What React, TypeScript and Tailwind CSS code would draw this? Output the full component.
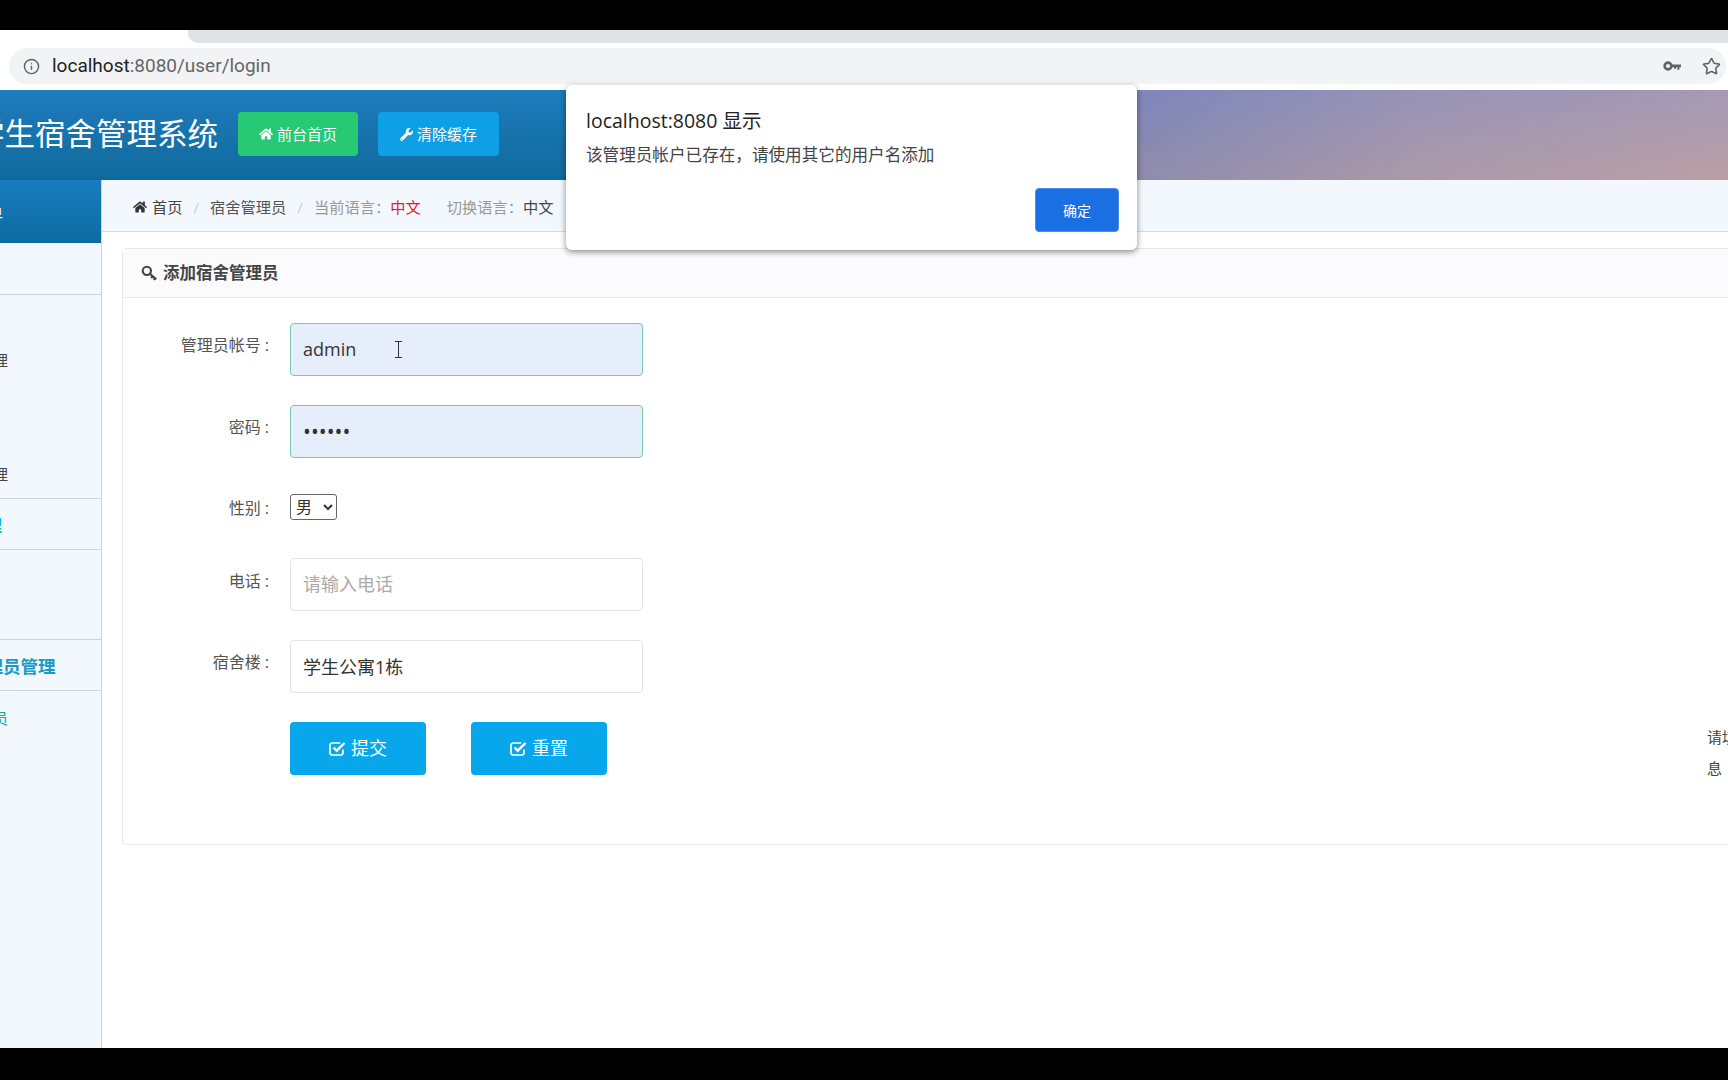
import { FaHome, FaWrench } from 'react-icons/fa';
import { Info, Star } from 'lucide-react';

const fontStack = "font-['Open_Sans','Noto_Sans_CJK_SC',sans-serif]";

function KeyIcon({ className }: { readonly className?: string }) {
  return (
    <svg className={className} viewBox="0 0 16 16" fill="none" stroke="currentColor" strokeWidth={2}>
      <circle cx="5.5" cy="5.5" r="3.9" />
      <path d="M8.4 8.4l6 5M11 10.6l-1.4 1.8M13.2 12.5l-1.2 1.6" />
    </svg>
  );
}

function OmniKey() {
  return (
    <svg className="w-[18px] h-[12px] text-[#5f6368]" viewBox="0 0 18 12" fill="none">
      <circle cx="5" cy="6" r="3.4" stroke="currentColor" strokeWidth="2.6" />
      <path d="M9 4.6h9v2.6h-1.6v2.6h-2V7.2h-1.4v1.6h-2V7.2H9z" fill="currentColor" />
    </svg>
  );
}

// fa-check-square-o: the tick runs out through the open top right of the box
function CheckSquare() {
  return (
    <svg className="w-[18px] h-[17px]" viewBox="0 0 18 17" fill="none" stroke="currentColor">
      <path d="M14 9.5v3.2a2.3 2.3 0 0 1-2.3 2.3H3.3A2.3 2.3 0 0 1 1 12.700V5.300A2.300 2.300 0 0 1 3.300 3h8" strokeWidth="1.700" />
      <path d="M4.500 7.500l3.200 3.200L15.500 3" strokeWidth="2.400" />
    </svg>
  );
}

function FormRow({ label, children, labelTop }: { readonly label: string; readonly children: React.ReactNode; readonly labelTop: string }) {
  return (
    <div className="flex">
      <label className={`w-[146px] text-right text-[16px] leading-[20px] text-[#555] ${labelTop}`}>{label}</label>
      <div className="ml-[21px]">{children}</div>
    </div>
  );
}

function TextField(props: React.InputHTMLAttributes<HTMLInputElement>) {
  return (
    <input
      readOnly
      {...props}
      className={`block w-[353px] h-[53px] px-[12px] pb-[2px] rounded-[4px] border text-[#333] placeholder-[#aaa] outline-none ${props.className}`}
    />
  );
}

export default function App() {
  return (
    <div className={`${fontStack} h-screen flex flex-col overflow-hidden bg-white`}>
      <div className="h-[30px] bg-black shrink-0" />

      {/* browser chrome */}
      <div className="h-[60px] shrink-0 bg-white">
        <div className="h-[13px] ml-[188px] bg-[#dfe1e7] rounded-bl-[10px]" />
        <div className="mt-[5px] ml-[9px] mr-[2px] h-[36px] bg-[#f1f3f5] rounded-full flex items-center pl-[14px] pr-[5px]">
          <Info className="w-[17px] h-[17px] text-[#5f6368]" strokeWidth={2} />
          <span className="ml-[12px] text-[19px] font-['Roboto','Noto_Sans_CJK_SC',sans-serif] text-[#666]">
            <span className="text-[#222]">localhost</span>:8080/user/login
          </span>
          <div className="ml-auto flex items-center gap-[21px]">
            <OmniKey />
            <Star className="w-[19px] h-[19px] text-[#5f6368]" strokeWidth={2} />
          </div>
        </div>
      </div>

      {/* site header */}
      <header className="h-[90px] pb-[2px] shrink-0 flex items-center overflow-hidden bg-[linear-gradient(180deg,#1f7cbd,#0f6a9c),linear-gradient(180deg,rgba(125,130,200,0.28),rgba(205,150,135,0.22)),linear-gradient(97deg,#1f7cae_0%,#1f7cae_33%,#7c88b6_65%,#a29ab2_82%,#b5a2ad_100%)] bg-[length:800px_100%,100%_100%,100%_100%] bg-no-repeat">
        <h1 className="-ml-[26px] w-[244px] shrink-0 text-[30.500px] font-normal text-white whitespace-nowrap">学生宿舍管理系统</h1>
        <button className="ml-[20px] w-[120px] h-[44px] rounded-[4px] bg-[#27c974] text-white text-[15px] flex items-center justify-center gap-[4px]">
          <FaHome className="w-[14px] h-[14px]" />
          前台首页
        </button>
        <button className="ml-[20px] w-[121px] h-[44px] rounded-[4px] bg-[#0f9fe6] text-white text-[15px] flex items-center justify-center gap-[4px]">
          <FaWrench className="w-[13px] h-[13px]" />
          清除缓存
        </button>
      </header>

      <div className="flex-1 min-h-0 flex">
        {/* sidebar, the page is scrolled so only its right edge shows */}
        <aside className="w-[102px] shrink-0 overflow-hidden bg-[#f2f8fe] border-r border-[#c9d6e2]">
          <div className="-ml-[130px] w-[231px]">
            <div className="h-[63px] pt-[4px] flex items-center pl-[65px] text-[17px] text-white bg-[linear-gradient(180deg,#1a7cc0,#0c6ba0)]">功能菜单</div>
            <div className="h-[52px] flex items-center pl-[66px] text-[17px] border-b border-[#c9d6e2]">学生</div>
            <div className="pt-[46px] pb-[5px] pl-[63px] flex flex-col gap-[19px] text-[15px] text-[#444]">
              <div className="h-[38px] flex items-center">宿舍楼管理</div>
              <div className="h-[38px] flex items-center">学生</div>
              <div className="h-[38px] flex items-center">寝室号管理</div>
            </div>
            <div className="h-[52px] pt-[4px] flex items-center pl-[64px] text-[17px] font-bold text-[#0cb4c4] border-y border-[#c9d6e2]">公告管理</div>
            <div className="h-[90px] pl-[63px] pt-[20px] text-[15px] text-[#444] border-b border-[#c9d6e2]">公告</div>
            <div className="h-[51px] pt-[3px] flex items-center pl-[63px] text-[17.500px] font-bold text-[#1a9ac4] border-b border-[#c9d6e2]">宿舍管理员管理</div>
            <div className="h-[54px] flex items-center pl-[63px] text-[15px] text-[#14a8b4]">添加管理员</div>
          </div>
        </aside>

        <main className="flex-1 min-w-0 overflow-hidden">
          <nav className="h-[52px] pt-[3px] flex items-center pl-[31px] text-[15.250px] bg-[#f2f8fe] border-b border-[#d5dbe0]">
            <FaHome className="w-[14px] h-[14px] text-[#333]" />
            <span className="ml-[5px] text-[#444]">首页</span>
            <span className="mx-[11px] text-[#ccc]">/</span>
            <span className="text-[#555]">宿舍管理员</span>
            <span className="mx-[11px] text-[#ccc]">/</span>
            <span className="text-[#999]">当前语言：</span>
            <span className="text-[#e02020]">中文</span>
            <span className="ml-[26px] text-[#999]">切换语言：</span>
            <span className="text-[#444]">中文</span>
          </nav>

          <section className="mt-[16px] ml-[20px] w-[1700px] h-[597px] rounded-[4px] border border-[#e8e8ec]">
            <div className="h-[49px] flex items-center pl-[18px] bg-[#fbfbfd] border-b border-[#e8e8ec]">
              <KeyIcon className="w-[17px] h-[17px] text-[#444]" />
              <h2 className="ml-[5px] text-[16.500px] font-bold text-[#444]">添加宿舍管理员</h2>
            </div>

            <div className="pt-[25px] flex flex-col">
              <FormRow label="管理员帐号 :" labelTop="mt-[12px]">
                <div className="relative">
                  <TextField defaultValue="admin" className="text-[18px] bg-[#e6eefb] border-[#7cc6b4]" />
                  <svg className="absolute left-[104px] top-[18px] w-[9px] h-[17px] text-[#333]" viewBox="0 0 9 17" fill="none" stroke="currentColor" strokeWidth="1">
                    <path d="M1 .5h7M1 16.500h7M4.500 .5v16" />
                  </svg>
                </div>
              </FormRow>
              <div className="mt-[29px]">
                <FormRow label="密码 :" labelTop="mt-[12px]">
                  <TextField type="password" defaultValue="123456" className="text-[21px] bg-[#e6eefb] border-[#7cc6b4]" />
                </FormRow>
              </div>
              <div className="mt-[36px]">
                <FormRow label="性别 :" labelTop="mt-[4px]">
                  <select className="block w-[47px] h-[26px] border border-[#666] rounded-[3px] bg-white text-[16px] text-[#333] pl-[1px]">
                    <option>男</option>
                  </select>
                </FormRow>
              </div>
              <div className="mt-[38px]">
                <FormRow label="电话 :" labelTop="mt-[13px]">
                  <TextField placeholder="请输入电话" className="text-[18px] border-[#e4e4e4]" />
                </FormRow>
              </div>
              <div className="mt-[29px]">
                <FormRow label="宿舍楼 :" labelTop="mt-[12px]">
                  <TextField defaultValue="学生公寓1栋" className="text-[18px] border-[#e4e4e4]" />
                </FormRow>
              </div>
              <div className="mt-[29px] ml-[167px] flex items-start">
                <button className="w-[136px] h-[53px] rounded-[4px] bg-[#08a7ec] text-white text-[18px] flex items-center justify-center gap-[4px]">
                  <CheckSquare />
                  提交
                </button>
                <button className="ml-[45px] w-[136px] h-[53px] rounded-[4px] bg-[#08a7ec] text-white text-[18px] flex items-center justify-center gap-[4px]">
                  <CheckSquare />
                  重置
                </button>
                <p className="ml-[1100px] w-[90px] shrink-0 text-[15px] leading-[31px] text-[#444]">请填写完整信息</p>
              </div>
            </div>
          </section>
        </main>
      </div>

      <div className="h-[32px] bg-black shrink-0" />

      {/* alert dialog */}
      <div className="absolute left-[566px] top-[85px] w-[571px] h-[165px] rounded-[6px] bg-white shadow-[0_2px_6px_rgba(0,0,0,0.45)] px-[20px] pt-[23px]">
        <p className="text-[19.500px] leading-[26px] text-[#222]">localhost:8080 显示</p>
        <p className="mt-[10px] text-[16.600px] leading-[22px] text-[#444]">该管理员帐户已存在，请使用其它的用户名添加</p>
        <div className="mt-[22px] flex justify-end -mr-[2px]">
          <button className="w-[84px] h-[44px] rounded-[4px] bg-[#1a6fe3] border border-[#4a8fe8] text-white text-[14px]">确定</button>
        </div>
      </div>
    </div>
  );
}
